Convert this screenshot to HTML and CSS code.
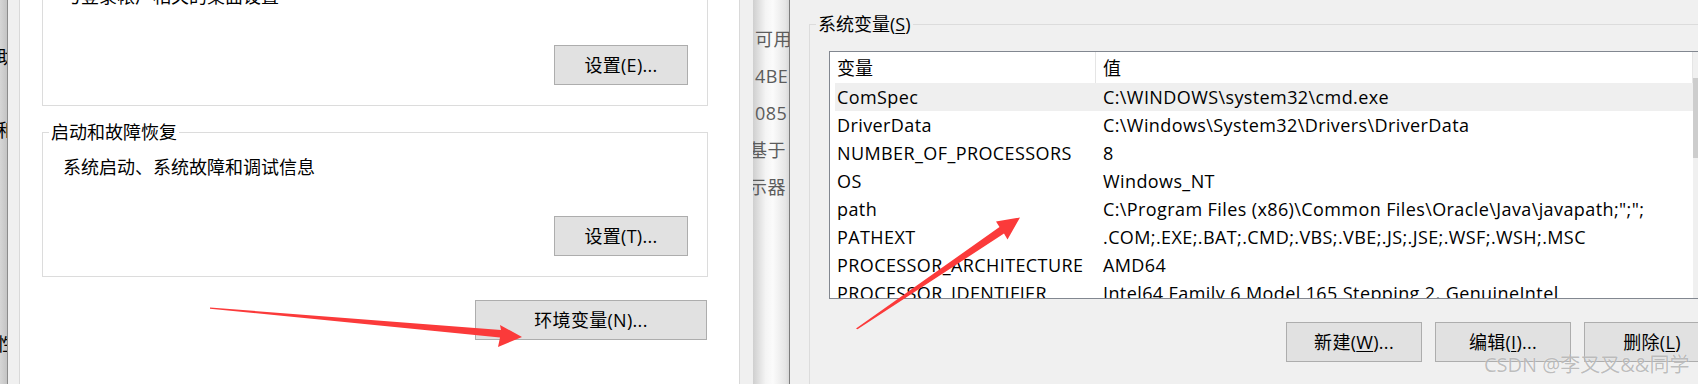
FILE: index.html
```html
<!DOCTYPE html>
<html lang="zh-CN">
<head>
  <meta charset="UTF-8" />
  <title>环境变量</title>
  <link rel="stylesheet" href="styles.css">
</head>
<body>
  <div class="screen">

    <div class="edge-left">
      <div class="edge-bar">
        <div class="ghost ghost-1">助</div>
        <div class="ghost ghost-2">和</div>
        <div class="ghost ghost-3">性</div>
      </div>
      <div class="edge-gap"></div>
    </div>

    <div class="sys-panel">
      <fieldset class="group group-top">
        <legend>用户配置文件</legend>
        <div class="group-inner">
          <p class="group-text">与登录帐户相关的桌面设置</p>
          <div class="group-actions">
            <button class="win-btn">设置(E)...</button>
          </div>
        </div>
      </fieldset>

      <fieldset class="group group-startup">
        <legend>启动和故障恢复</legend>
        <div class="group-inner">
          <p class="group-text">系统启动、系统故障和调试信息</p>
          <div class="group-actions">
            <button class="win-btn">设置(T)...</button>
          </div>
        </div>
      </fieldset>

      <div class="panel-actions">
        <button class="win-btn wide">环境变量(N)...</button>
      </div>
    </div>

    <div class="mid-strip">
      <div class="mid-gap"></div>
      <div class="mid-bar">
        <div class="behind-line">可用</div>
        <div class="behind-line">4BE</div>
        <div class="behind-line">085</div>
        <div class="behind-line shifted">基于</div>
        <div class="behind-line shifted">示器</div>
      </div>
    </div>

    <div class="env-window">
      <fieldset class="group sys-vars">
        <legend>系统变量(<u>S</u>)</legend>
        <div class="listview">
          <div class="list-body">
            <div class="list-head">
              <span>变量</span>
              <span>值</span>
            </div>
            <div class="list-row selected">
              <span>ComSpec</span>
              <span>C:\WINDOWS\system32\cmd.exe</span>
            </div>
            <div class="list-row">
              <span>DriverData</span>
              <span>C:\Windows\System32\Drivers\DriverData</span>
            </div>
            <div class="list-row">
              <span>NUMBER_OF_PROCESSORS</span>
              <span>8</span>
            </div>
            <div class="list-row">
              <span>OS</span>
              <span>Windows_NT</span>
            </div>
            <div class="list-row">
              <span>path</span>
              <span>C:\Program Files (x86)\Common Files\Oracle\Java\javapath;";";</span>
            </div>
            <div class="list-row">
              <span>PATHEXT</span>
              <span>.COM;.EXE;.BAT;.CMD;.VBS;.VBE;.JS;.JSE;.WSF;.WSH;.MSC</span>
            </div>
            <div class="list-row">
              <span>PROCESSOR_ARCHITECTURE</span>
              <span>AMD64</span>
            </div>
            <div class="list-row">
              <span>PROCESSOR_IDENTIFIER</span>
              <span>Intel64 Family 6 Model 165 Stepping 2, GenuineIntel</span>
            </div>
          </div>
          <div class="scrollbar">
            <div class="thumb"></div>
          </div>
        </div>

        <div class="btn-row">
          <button class="win-btn env-btn">新建(<u>W</u>)...</button>
          <button class="win-btn env-btn">编辑(<u>I</u>)...</button>
          <button class="win-btn env-btn">删除(<u>L</u>)</button>
        </div>
      </fieldset>
    </div>

    <!-- red annotation arrows -->
    <svg class="arrows" width="1698" height="384" viewBox="0 0 1698 384">
      <polygon points="210,307.5 501,330 500,325 522,337 498,347 500,337.5 210,308.7" />
      <polygon points="856,328.5 999.5,227 996,221.5 1020,217.5 1007.5,239.5 1004,233.5 857.5,329.3" />
    </svg>

    <div class="watermark">CSDN @李叉叉&amp;&amp;同学</div>
  </div>
</body>
</html>
```

FILE: styles.css
```css
* {
  box-sizing: border-box;
}

body {
  margin: 0;
  font-family: "Open Sans", "Noto Sans CJK SC", sans-serif;
  font-size: 18px;
  color: #000;
  background: #f0f0f0;
  overflow: hidden;
}

.screen {
  position: relative;
  display: flex;
  width: 1698px;
  height: 384px;
  overflow: hidden;
}

/* window edges peeking out on the far left */
.edge-left {
  display: flex;
  width: 20px;
  flex-shrink: 0;
}

.edge-bar {
  width: 8px;
  overflow: hidden;
  background: linear-gradient(to right, #d6d6d6, #c4c4c4);
  border-right: 1px solid #8c8c8c;
  display: flex;
  flex-direction: column;
  align-items: flex-end;
}

.ghost {
  width: 18px;
  flex-shrink: 0;
  margin-right: -8px;
  line-height: 24px;
  white-space: nowrap;
}

.ghost-1 { margin-top: 45px; }
.ghost-2 { margin-top: 49px; }
.ghost-3 { margin-top: 190px; }

.edge-gap {
  flex: 1;
  background: #f0f0f0;
  border-right: 1px solid #d9d9d9;
}

/* system properties panel */
.sys-panel {
  width: 720px;
  flex-shrink: 0;
  background: #fff;
  border-right: 1px solid #d9d9d9;
  padding-left: 22px;
}

.group {
  margin: 0;
  padding: 0;
  min-width: 0;
  border: 1px solid #dcdcdc;
}

.group legend {
  margin-left: 6px;
  padding: 0 2px;
  line-height: 18px;
}

.sys-panel .group {
  width: 666px;
}

.group-top {
  margin-top: -48px;
}

.group-startup {
  margin-top: 17px;
}

.group-inner {
  padding: 14px 19px 20px 20px;
}

.group-text {
  margin: 0;
  line-height: 24px;
}

.group-actions {
  display: flex;
  justify-content: flex-end;
  margin-top: 37px;
}

.win-btn {
  font-family: inherit;
  font-size: 18px;
  color: #000;
  background: #e1e1e1;
  border: 1px solid #adadad;
  border-radius: 0;
  width: 134px;
  height: 40px;
  padding: 0;
  line-height: 24px;
  letter-spacing: 0.3px;
}

.win-btn.wide {
  width: 232px;
}

.panel-actions {
  display: flex;
  justify-content: flex-end;
  width: 665px;
  margin-top: 23px;
}

/* strip of the window in between */
.mid-strip {
  display: flex;
  width: 50px;
  flex-shrink: 0;
}

.mid-gap {
  width: 13px;
  background: #f0f0f0;
}

.mid-bar {
  width: 37px;
  overflow: hidden;
  padding-top: 21px;
  background: linear-gradient(to right, #cfcfcf 0%, #f4f4f4 35%, #fbfbfb 55%, #e6e6e6 90%, #d9d9d9 100%);
  border-right: 1px solid #7d7d7d;
}

.behind-line {
  line-height: 37px;
  white-space: nowrap;
  color: #5c5c5c;
  padding-left: 2px;
  letter-spacing: 0.4px;
}

.behind-line.shifted {
  margin-left: -6px;
}

/* environment variables dialog */
.env-window {
  flex: 1;
  min-width: 0;
  background: #f0f0f0;
  padding: 15px 0 0 19px;
}

.sys-vars {
  width: 940px;
  height: 420px;
}

.sys-vars u {
  text-decoration-thickness: 1px;
  text-underline-offset: 2px;
}

.listview {
  display: flex;
  width: 882px;
  height: 248px;
  margin: 18px 0 0 19px;
  background: #fff;
  border: 1px solid #828790;
  overflow: hidden;
}

.list-body {
  width: 863px;
  flex-shrink: 0;
}

.list-head,
.list-row {
  display: grid;
  grid-template-columns: 261px 1fr;
  margin-left: 5px;
  white-space: nowrap;
}

.list-head {
  height: 31px;
  line-height: 33px;
  border-right: 1px solid #e5e5e5;
}

.list-head span:first-child {
  border-right: 1px solid #e5e5e5;
}

.list-row {
  height: 28px;
  line-height: 28px;
  letter-spacing: 0.4px;
}

.list-head span,
.list-row span {
  overflow: hidden;
}

.list-head span:first-child,
.list-row span:first-child {
  padding-left: 2px;
}

.list-head span:last-child,
.list-row span:last-child {
  padding-left: 7px;
}

.list-row.selected {
  background: #efefef;
}

.scrollbar {
  width: 17px;
  flex-shrink: 0;
  background: #f0f0f0;
  padding-top: 26px;
}

.thumb {
  height: 80px;
  background: #cdcdcd;
}

.btn-row {
  display: flex;
  gap: 13px;
  margin-top: 23px;
  padding-left: 476px;
}

.env-btn {
  width: 136px;
}

.env-btn u {
  text-underline-offset: 2px;
}

/* overlays */
.arrows {
  position: absolute;
  top: 0;
  left: 0;
  pointer-events: none;
}

.arrows polygon {
  fill: #fb3a3a;
}

.watermark {
  position: absolute;
  left: 1484px;
  top: 353px;
  font-size: 20px;
  line-height: 24px;
  white-space: nowrap;
  color: rgba(110, 110, 110, 0.45);
  text-shadow: 0 0 1px rgba(255, 255, 255, 0.9);
}
```
